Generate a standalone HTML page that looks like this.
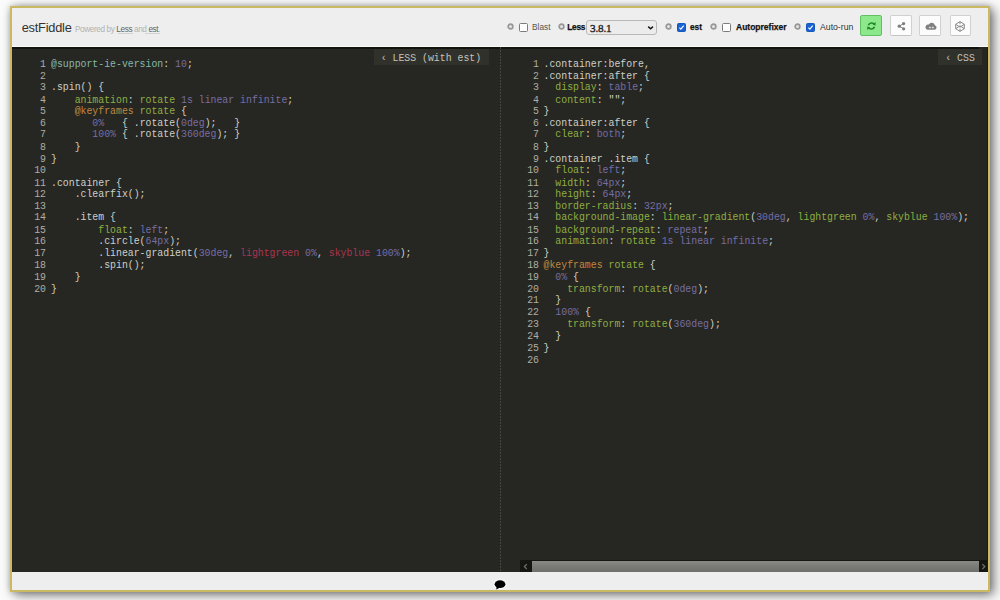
<!DOCTYPE html>
<html><head><meta charset="utf-8">
<style>
html,body{margin:0;padding:0;width:1000px;height:600px;overflow:hidden;background:#fbfbfb;font-family:"Liberation Sans",sans-serif;}
.abs{position:absolute;}
#frame{position:absolute;left:10px;top:6px;width:980px;height:586px;box-sizing:border-box;border:2px solid #cbb862;box-shadow:0 0 6px rgba(0,0,0,.22),4px 3px 11px rgba(0,0,0,.5);background:#ececec;}
#header{position:absolute;left:12px;top:8px;width:976px;height:38px;background:#eeeeee;}
#hline{position:absolute;left:12px;top:46px;width:976px;height:1px;background:#fafafa;}
#editor{position:absolute;left:12px;top:47px;width:976px;height:525px;background:#262722;}
#footer{position:absolute;left:12px;top:572px;width:976px;height:18px;background:#eeeeee;}
.code{position:absolute;margin:0;font-family:"Liberation Mono",monospace;font-size:9.85px;line-height:10.5625px;color:#cfcfc8;white-space:pre;transform:scaleY(1.12);transform-origin:0 0;}
.num{position:absolute;margin:0;font-family:"Liberation Mono",monospace;font-size:9.85px;line-height:10.5625px;color:#aeaea6;white-space:pre;text-align:right;transform:scaleY(1.12);transform-origin:0 0;}
.g{color:#8fae42}
.p{color:#766da4}
.t{color:#8ab8aa}
.o{color:#c08840}
.r{color:#ab3550}
.tab{position:absolute;background:#31312c;color:#c4c4bc;font-family:"Liberation Mono",monospace;font-size:9.85px;line-height:17px;height:17px;white-space:pre;}
.lbl{position:absolute;font-size:8.3px;color:#333;top:22px;line-height:10px;white-space:nowrap;}
.lbl[style*="bold"]{-webkit-text-stroke:0.25px #111;}
.gear{position:absolute;top:23.2px;width:2.6px;height:2.6px;border:1.8px solid #999;border-radius:50%;background:#e2e2e2;margin-left:-0.3px;}
.cb{position:absolute;top:23px;width:7px;height:7px;border:1px solid #7c7c7c;border-radius:1.5px;background:#fdfdfd;}
.cbon{background:#1a62d2;border-color:#1558bb;}
.btn{position:absolute;top:15px;width:21px;height:20px;box-sizing:border-box;border:1px solid #d6d6d6;border-radius:2px;background:#fcfcfc;}
</style></head>
<body>
<div id="frame"></div>
<div id="header"></div>
<div id="hline"></div>

<!-- header left -->
<div class="abs" style="left:21.7px;top:20.7px;font-size:12.8px;letter-spacing:-0.22px;line-height:14px;color:#333;white-space:nowrap;">estFiddle</div>
<div class="abs" style="left:75px;top:25px;font-size:8.2px;line-height:10px;color:#b2b2b2;letter-spacing:-0.38px;white-space:nowrap;">Powered by <span style="color:#626262;">Less</span> and <span style="color:#626262;">est</span>.</div>
<div class="abs" style="left:117.5px;top:33px;width:15.5px;height:1px;background:#d2d2d2;"></div>
<div class="abs" style="left:144.5px;top:33px;width:15.5px;height:1px;background:#d2d2d2;"></div>

<!-- toolbar -->
<svg class="abs" style="left:506.5px;top:23px" width="7" height="7" viewBox="0 0 7 7"><circle cx="3.5" cy="3.5" r="2.35" fill="#e4e4e4" stroke="#979797" stroke-width="1.7"/></svg>
<div class="cb" style="left:519px;"></div>
<div class="lbl" style="left:532px;color:#555;">Blast</div>
<svg class="abs" style="left:557.5px;top:23px" width="7" height="7" viewBox="0 0 7 7"><circle cx="3.5" cy="3.5" r="2.35" fill="#e4e4e4" stroke="#979797" stroke-width="1.7"/></svg>
<div class="lbl" style="left:567.3px;font-weight:bold;color:#111;letter-spacing:-0.25px;">Less</div>
<div class="abs" style="left:586px;top:20px;width:71px;height:15px;box-sizing:border-box;border:1px solid #b9b9b9;border-radius:3px;background:#ececec;"></div>
<div class="abs" style="left:590px;top:21.5px;font-family:'Liberation Serif',serif;font-size:11.2px;line-height:13px;color:#222;-webkit-text-stroke:0.35px #222;letter-spacing:-0.2px;">3.8.1</div>
<svg class="abs" style="left:646px;top:24px" width="9" height="7" viewBox="0 0 9 7"><path d="M2.2 2.6 L4.6 4.8 L7 2.6" fill="none" stroke="#1a1a1a" stroke-width="1.5"/></svg>
<svg class="abs" style="left:664.5px;top:23px" width="7" height="7" viewBox="0 0 7 7"><circle cx="3.5" cy="3.5" r="2.35" fill="#e4e4e4" stroke="#979797" stroke-width="1.7"/></svg>
<div class="cb cbon" style="left:677px;"><svg width="7" height="7" viewBox="0 0 8 8" style="position:absolute;left:0;top:0"><path d="M1.6 4.2 L3.3 5.9 L6.5 1.9" fill="none" stroke="#fff" stroke-width="1.2"/></svg></div>
<div class="lbl" style="left:690px;font-weight:bold;color:#111;">est</div>
<svg class="abs" style="left:709.5px;top:23px" width="7" height="7" viewBox="0 0 7 7"><circle cx="3.5" cy="3.5" r="2.35" fill="#e4e4e4" stroke="#979797" stroke-width="1.7"/></svg>
<div class="cb" style="left:722px;"></div>
<div class="lbl" style="left:736px;font-weight:bold;color:#111;font-size:8.5px;">Autoprefixer</div>
<svg class="abs" style="left:793.5px;top:23px" width="7" height="7" viewBox="0 0 7 7"><circle cx="3.5" cy="3.5" r="2.35" fill="#e4e4e4" stroke="#979797" stroke-width="1.7"/></svg>
<div class="cb cbon" style="left:806px;"><svg width="7" height="7" viewBox="0 0 8 8" style="position:absolute;left:0;top:0"><path d="M1.6 4.2 L3.3 5.9 L6.5 1.9" fill="none" stroke="#fff" stroke-width="1.2"/></svg></div>
<div class="lbl" style="left:820px;color:#333;font-size:8.7px;">Auto-run</div>

<div class="btn" style="left:860px;top:14.8px;width:22px;height:21.3px;background:#8ce88b;border-color:#62c062;"></div>
<svg class="abs" style="left:860px;top:15px" width="22" height="21" viewBox="0 0 22 21">
<g transform="translate(11.4 11) scale(0.82) translate(-11 -11)">
<path d="M14.6 9.4 A3.9 3.9 0 0 0 7.4 10.2" fill="none" stroke="#218a24" stroke-width="2.1"/>
<path d="M12.6 8.8 L16.2 6.2 L16 10.8 Z" fill="#218a24"/>
<path d="M7.4 12.6 A3.9 3.9 0 0 0 14.6 11.8" fill="none" stroke="#218a24" stroke-width="2.1"/>
<path d="M9.4 13.2 L5.8 15.8 L6 11.2 Z" fill="#218a24"/>
</g></svg>
<div class="btn" style="left:890px;top:15.2px;width:21.5px;height:20.8px;border-color:#d0d0d0;border-bottom-color:#c4c4c4;"></div>
<svg class="abs" style="left:890px;top:15px" width="22" height="21" viewBox="0 0 22 21">
<path d="M9.2 11.2 L13.6 8.6 M9.2 11.2 L13.6 13.8" stroke="#7e7e7e" stroke-width="1"/>
<circle cx="9.2" cy="11.2" r="1.6" fill="#7e7e7e"/><circle cx="13.6" cy="8.6" r="1.6" fill="#7e7e7e"/><circle cx="13.6" cy="13.8" r="1.6" fill="#7e7e7e"/>
</svg>
<div class="btn" style="left:919px;top:15.2px;width:22.4px;height:20.8px;border-color:#d0d0d0;border-bottom-color:#c4c4c4;"></div>
<svg class="abs" style="left:919px;top:15px" width="23" height="21" viewBox="0 0 23 21">
<path d="M8.6 14.8 L15.4 14.8 A2.3 2.3 0 0 0 15.9 10.3 A3.3 3.3 0 0 0 9.8 9.6 A2.6 2.6 0 0 0 8.6 14.8 Z" fill="#808080"/>
<rect x="9.9" y="11.7" width="2.1" height="1.5" rx="0.5" fill="#dadada"/><rect x="12.8" y="11.7" width="2.1" height="1.5" rx="0.5" fill="#dadada"/>
</svg>
<div class="btn" style="left:949.5px;top:15.2px;width:21.5px;height:20.8px;border-color:#d0d0d0;border-bottom-color:#c4c4c4;"></div>
<svg class="abs" style="left:949px;top:15px" width="22" height="21" viewBox="0 0 22 21">
<path d="M11 6.6 L15.3 9.3 L15.3 13.7 L11 16.4 L6.7 13.7 L6.7 9.3 Z M11 6.6 L11 9.2 M6.7 9.3 L11 12.2 L15.3 9.3 M6.7 13.7 L11 10.8 L15.3 13.7 M11 16.4 L11 13.8" fill="none" stroke="#858585" stroke-width="0.95" stroke-linejoin="round"/>
</svg>

<div id="editor"></div>
<div class="abs" style="left:12px;top:47px;width:976px;height:1.5px;background:#13130e;"></div>
<div class="abs" style="left:500px;top:47px;width:1px;height:525px;background:repeating-linear-gradient(to bottom,#46463f 0,#46463f 2px,transparent 2px,transparent 3px);"></div>

<div class="tab" style="left:373.7px;top:48.5px;width:115px;height:16.5px;box-sizing:border-box;padding-left:7px;"><span style="display:inline-block;transform:scaleY(1.2);transform-origin:50% 55%;position:relative;top:1.6px;">‹ LESS (with est)</span></div>
<div class="abs" style="left:978.7px;top:47px;width:9px;height:513px;background:#252620;"></div>
<div class="tab" style="left:937.8px;top:48.5px;width:44px;height:16.8px;box-sizing:border-box;padding-left:7.5px;"><span style="display:inline-block;transform:scaleY(1.2);transform-origin:50% 55%;position:relative;top:1.6px;">‹ CSS</span></div>

<pre class="num" style="left:12px;top:59.3px;width:34px;">1
2
3
4
5
6
7
8
9
10
11
12
13
14
15
16
17
18
19
20</pre>
<pre class="code" style="left:51px;top:59.3px;"><span class="t">@support-ie-version</span>: <span class="p">10</span>;

.spin() {
    <span class="g">animation</span>: <span class="g">rotate</span> <span class="p">1s linear infinite</span>;
    <span class="o">@keyframes</span> <span class="g">rotate</span> {
       <span class="p">0%</span>   { .rotate(<span class="p">0deg</span>);   }
       <span class="p">100%</span> { .rotate(<span class="p">360deg</span>); }
    }
}

.container {
    .clearfix();

    .item {
        <span class="g">float</span>: <span class="p">left</span>;
        .circle(<span class="p">64px</span>);
        .linear-gradient(<span class="p">30deg</span>, <span class="r">lightgreen</span> <span class="p">0%</span>, <span class="r">skyblue</span> <span class="p">100%</span>);
        .spin();
    }
}</pre>

<pre class="num" style="left:501px;top:59.3px;width:38px;">1
2
3
4
5
6
7
8
9
10
11
12
13
14
15
16
17
18
19
20
21
22
23
24
25
26</pre>
<pre class="code" style="left:543.5px;top:59.3px;">.container:before,
.container:after {
  <span class="g">display</span>: <span class="p">table</span>;
  <span class="g">content</span>: "";
}
.container:after {
  <span class="g">clear</span>: <span class="p">both</span>;
}
.container .item {
  <span class="g">float</span>: <span class="p">left</span>;
  <span class="g">width</span>: <span class="p">64px</span>;
  <span class="g">height</span>: <span class="p">64px</span>;
  <span class="g">border-radius</span>: <span class="p">32px</span>;
  <span class="g">background-image</span>: <span class="g">linear-gradient</span>(<span class="p">30deg</span>, <span class="g">lightgreen</span> <span class="p">0%</span>, <span class="g">skyblue</span> <span class="p">100%</span>);
  <span class="g">background-repeat</span>: <span class="p">repeat</span>;
  <span class="g">animation</span>: <span class="g">rotate</span> <span class="p">1s linear infinite</span>;
}
<span class="o">@keyframes</span> <span class="g">rotate</span> {
  <span class="p">0%</span> {
    <span class="g">transform</span>: <span class="g">rotate</span>(<span class="p">0deg</span>);
  }
  <span class="p">100%</span> {
    <span class="g">transform</span>: <span class="g">rotate</span>(<span class="p">360deg</span>);
  }
}
</pre>

<!-- scrollbar -->
<div class="abs" style="left:520px;top:560px;width:468px;height:12px;background:#151511;"></div>
<div class="abs" style="left:532px;top:560.6px;width:447px;height:11.4px;background:linear-gradient(#8a8a87,#7b7b78 45%,#6f6f6c);"></div>
<svg class="abs" style="left:520px;top:561px" width="11" height="11" viewBox="0 0 11 11"><path d="M6.8 3.2 L4.4 5.6 L6.8 8" fill="none" stroke="#6e6e6a" stroke-width="1.3"/></svg>
<svg class="abs" style="left:979px;top:561px" width="9" height="11" viewBox="0 0 9 11"><path d="M3.4 3.2 L5.8 5.6 L3.4 8" fill="none" stroke="#6e6e6a" stroke-width="1.3"/></svg>
<div class="abs" style="left:987px;top:47px;width:1px;height:525px;background:#1d1d18;"></div>
<div id="footer"></div>
<svg class="abs" style="left:493px;top:578px" width="14" height="13" viewBox="0 0 14 13"><ellipse cx="7" cy="6.2" rx="6.6" ry="5" fill="#fbfbfb"/><ellipse cx="7" cy="6.2" rx="5.4" ry="3.9" fill="#000"/><path d="M3.6 8.6 L3.3 11.6 L7.2 9.6 Z" fill="#000"/></svg>
</body></html>
